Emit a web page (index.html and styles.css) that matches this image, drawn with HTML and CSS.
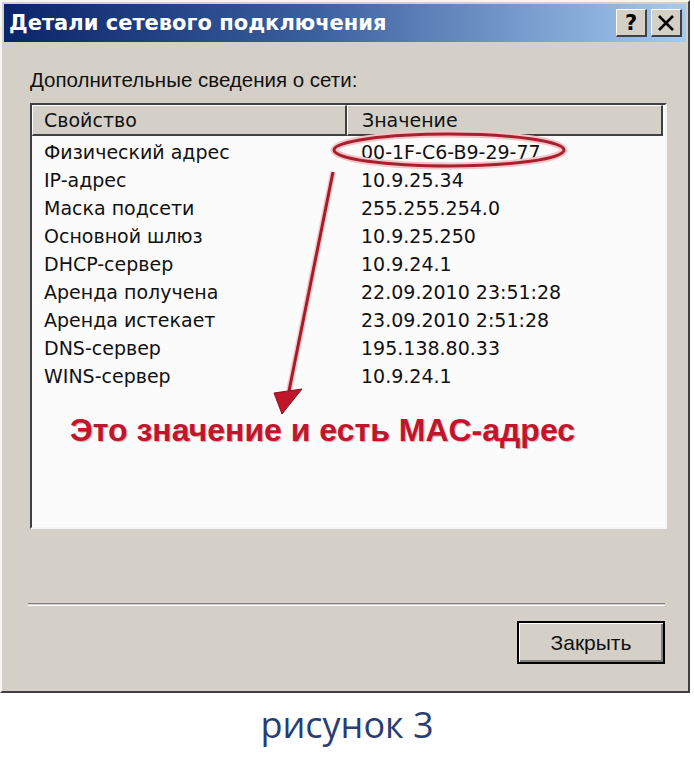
FILE: index.html
```html
<!DOCTYPE html>
<html lang="ru">
<head>
<meta charset="utf-8">
<title>Детали сетевого подключения</title>
<link rel="stylesheet" href="styles.css">
</head>
<body>
<div class="window">
  <div class="titlebar">
    <span class="title">Детали сетевого подключения</span>
    <div class="tbtns">
      <span class="tbtn help">?</span>
      <span class="tbtn close"><svg width="18" height="16" viewBox="0 0 18 16"><path d="M2 1 L16 15 M16 1 L2 15" stroke="#000" stroke-width="2.6" fill="none"/></svg></span>
    </div>
  </div>
  <div class="content">
    <div class="label">Дополнительные сведения о сети:</div>
    <div class="listbox">
      <div class="lheader">
        <div class="hcell c1">Свойство</div>
        <div class="hcell c2">Значение</div>
      </div>
      <div class="rows">
        <div class="k">Физический адрес</div><div class="v">00-1F-C6-B9-29-77</div>
        <div class="k">IP-адрес</div><div class="v">10.9.25.34</div>
        <div class="k">Маска подсети</div><div class="v">255.255.254.0</div>
        <div class="k">Основной шлюз</div><div class="v">10.9.25.250</div>
        <div class="k">DHCP-сервер</div><div class="v">10.9.24.1</div>
        <div class="k">Аренда получена</div><div class="v">22.09.2010 23:51:28</div>
        <div class="k">Аренда истекает</div><div class="v">23.09.2010 2:51:28</div>
        <div class="k">DNS-сервер</div><div class="v">195.138.80.33</div>
        <div class="k">WINS-сервер</div><div class="v">10.9.24.1</div>
      </div>
      <div class="note">Это значение и есть MAC-адрес</div>
      <svg class="annot" width="633" height="422" viewBox="0 0 633 422">
        <ellipse cx="417" cy="45" rx="115" ry="16" fill="none" stroke="#f3c4c8" stroke-width="7"/>
        <ellipse cx="417" cy="45" rx="115" ry="16" fill="none" stroke="#a8202e" stroke-width="3"/>
        <line x1="301" y1="67" x2="257" y2="286" stroke="#f2c8cc" stroke-width="6"/>
        <line x1="301" y1="67" x2="257" y2="286" stroke="#a81a28" stroke-width="3"/>
        <polygon points="242,288 270,284 250,309" fill="#c0162a" stroke="#8e1020" stroke-width="1"/>
      </svg>
    </div>
    <div class="sep"></div>
    <div class="actions"><button class="btn" type="button">Закрыть</button></div>
  </div>
</div>
<div class="caption">рисунок 3</div>
</body>
</html>
```
FILE: styles.css
```css
html, body {
  margin: 0;
  padding: 0;
  background: #ffffff;
}
body {
  width: 694px;
  height: 760px;
  overflow: hidden;
  font-family: "Liberation Sans", Arial, sans-serif;
}
.window {
  box-sizing: border-box;
  width: 690px;
  height: 693px;
  background: #d4d0c8;
  border-top: 2px solid #f6f5f2;
  border-left: 2px solid #f6f5f2;
  border-right: 2px solid #404040;
  border-bottom: 2px solid #404040;
  padding: 2px;
  display: flex;
  flex-direction: column;
}
.titlebar {
  height: 38px;
  flex: none;
  background: linear-gradient(to right, #0a246a 0%, #3a5f9e 45%, #a6caf0 100%);
  display: flex;
  align-items: center;
  justify-content: space-between;
  padding: 0 4px 0 5px;
}
.title {
  color: #ffffff;
  font-family: "DejaVu Sans", sans-serif;
  font-weight: bold;
  font-size: 21px;
}
.tbtns {
  display: flex;
  gap: 4px;
}
.tbtn {
  box-sizing: border-box;
  width: 31px;
  height: 28px;
  background: #d4d0c8;
  border-top: 1px solid #ffffff;
  border-left: 1px solid #ffffff;
  border-right: 2px solid #404040;
  border-bottom: 2px solid #404040;
  display: flex;
  align-items: center;
  justify-content: center;
  color: #000;
}
.help {
  font-family: "DejaVu Sans", sans-serif;
  font-weight: bold;
  font-size: 21px;
}
.content {
  flex: 1;
  display: flex;
  flex-direction: column;
  padding: 26px 19px 0 26px;
  color: #111;
  font-size: 20px;
}
.label {
  line-height: 24px;
  height: 24px;
  font-size: 20.5px;
}
.listbox {
  position: relative;
  margin-top: 11px;
  height: 426px;
  box-sizing: border-box;
  background: #fbfbfb;
  border-top: 2px solid #404040;
  border-left: 2px solid #404040;
  border-right: 2px solid #f4f4f4;
  border-bottom: 2px solid #f4f4f4;
  font-family: "DejaVu Sans", sans-serif;
  font-size: 19px;
}
.lheader {
  display: flex;
  height: 31px;
}
.hcell {
  box-sizing: border-box;
  height: 31px;
  background: #d4d0c8;
  border-top: 1px solid #ffffff;
  border-left: 1px solid #ffffff;
  border-right: 2px solid #404040;
  border-bottom: 2px solid #404040;
  line-height: 28px;
  padding-left: 11px;
}
.c1 { width: 315px; }
.c2 { width: 316px; padding-left: 14px; }
.rows {
  display: grid;
  grid-template-columns: 329px 1fr;
  margin-top: 2px;
  line-height: 28px;
}
.k { padding-left: 12px; }
.note {
  margin-top: 22px;
  padding-left: 38px;
  line-height: 36px;
  font-family: "Liberation Sans", Arial, sans-serif;
  font-size: 32px;
  font-weight: bold;
  color: #c3142d;
  text-shadow: 1px 1px 1px rgba(90, 0, 10, 0.35);
}
.annot {
  position: absolute;
  left: 0;
  top: 0;
  pointer-events: none;
}
.sep {
  margin: 74px 2px 0 -2px;
  height: 1px;
  border-top: 1px solid #808080;
  border-bottom: 1px solid #ffffff;
}
.actions {
  display: flex;
  justify-content: flex-end;
  padding-right: 2px;
  margin-top: 15px;
}
.btn {
  box-sizing: border-box;
  width: 148px;
  height: 43px;
  background: #d4d0c8;
  border: 2px solid #000;
  box-shadow: inset 1px 1px 0 #ffffff, inset -2px -2px 0 #808080;
  font-family: "Liberation Sans", Arial, sans-serif;
  font-size: 21px;
  color: #111;
  padding: 0;
}
.caption {
  text-align: center;
  margin-top: 8px;
  font-family: "Open Sans", sans-serif;
  font-size: 36px;
  line-height: 48px;
  color: #2a3d72;
}
```
